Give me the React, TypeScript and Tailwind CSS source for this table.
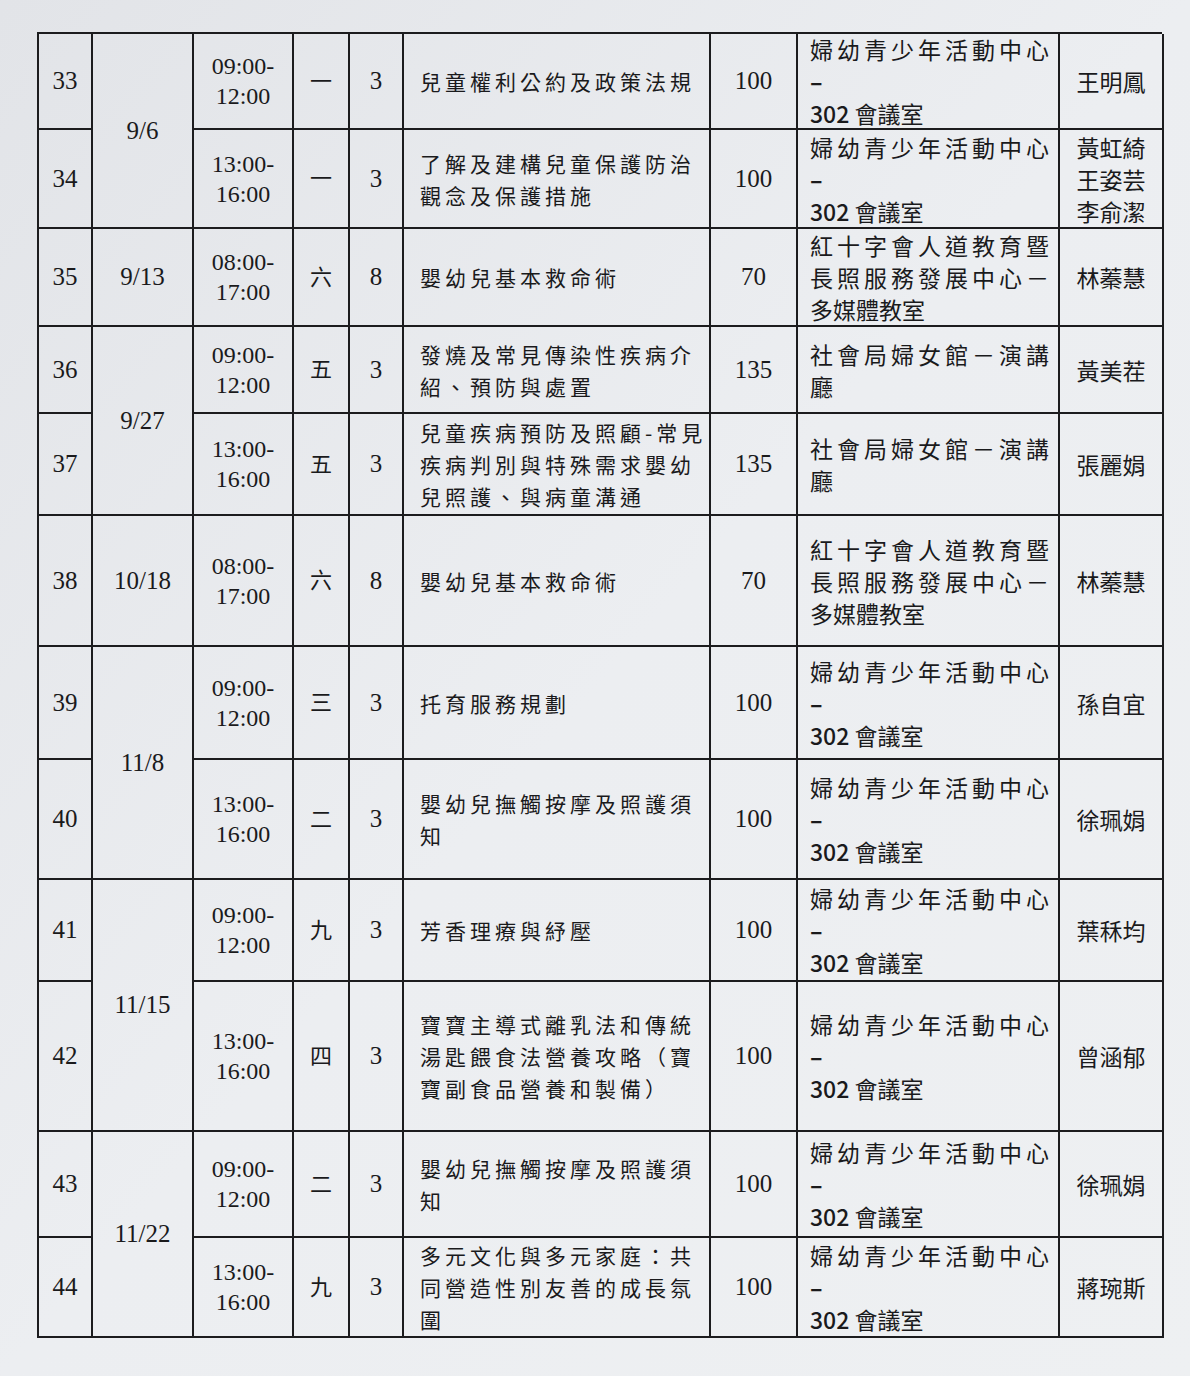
const serif = "[font-family:'Liberation_Serif','Noto_Sans_CJK_TC',serif]";
const sans = "[font-family:'Noto_Sans_CJK_TC','Noto_Sans',sans-serif]";

type Row = {
  no: number;
  date?: string;
  span?: boolean;
  start: string;
  end: string;
  day: string;
  hours: string;
  course: string[];
  seats: string;
  venue: 'A' | 'RC' | 'W';
  names: string[];
};

const rows: Row[] = [
  { no: 33, date: '9/6', span: true, start: '09:00-', end: '12:00', day: '一', hours: '3', course: ['兒童權利公約及政策法規'], seats: '100', venue: 'A', names: ['王明鳳'] },
  { no: 34, start: '13:00-', end: '16:00', day: '一', hours: '3', course: ['了解及建構兒童保護防治', '觀念及保護措施'], seats: '100', venue: 'A', names: ['黃虹綺', '王姿芸', '李俞潔'] },
  { no: 35, date: '9/13', start: '08:00-', end: '17:00', day: '六', hours: '8', course: ['嬰幼兒基本救命術'], seats: '70', venue: 'RC', names: ['林蓁慧'] },
  { no: 36, date: '9/27', span: true, start: '09:00-', end: '12:00', day: '五', hours: '3', course: ['發燒及常見傳染性疾病介', '紹、預防與處置'], seats: '135', venue: 'W', names: ['黃美茬'] },
  { no: 37, start: '13:00-', end: '16:00', day: '五', hours: '3', course: ['兒童疾病預防及照顧-常見', '疾病判別與特殊需求嬰幼', '兒照護、與病童溝通'], seats: '135', venue: 'W', names: ['張麗娟'] },
  { no: 38, date: '10/18', start: '08:00-', end: '17:00', day: '六', hours: '8', course: ['嬰幼兒基本救命術'], seats: '70', venue: 'RC', names: ['林蓁慧'] },
  { no: 39, date: '11/8', span: true, start: '09:00-', end: '12:00', day: '三', hours: '3', course: ['托育服務規劃'], seats: '100', venue: 'A', names: ['孫自宜'] },
  { no: 40, start: '13:00-', end: '16:00', day: '二', hours: '3', course: ['嬰幼兒撫觸按摩及照護須', '知'], seats: '100', venue: 'A', names: ['徐珮娟'] },
  { no: 41, date: '11/15', span: true, start: '09:00-', end: '12:00', day: '九', hours: '3', course: ['芳香理療與紓壓'], seats: '100', venue: 'A', names: ['葉秝均'] },
  { no: 42, start: '13:00-', end: '16:00', day: '四', hours: '3', course: ['寶寶主導式離乳法和傳統', '湯匙餵食法營養攻略（寶', '寶副食品營養和製備）'], seats: '100', venue: 'A', names: ['曾涵郁'] },
  { no: 43, date: '11/22', span: true, start: '09:00-', end: '12:00', day: '二', hours: '3', course: ['嬰幼兒撫觸按摩及照護須', '知'], seats: '100', venue: 'A', names: ['徐珮娟'] },
  { no: 44, start: '13:00-', end: '16:00', day: '九', hours: '3', course: ['多元文化與多元家庭：共', '同營造性別友善的成長氛', '圍'], seats: '100', venue: 'A', names: ['蔣琬斯'] },
];

const cell = 'border-r-2 border-b-2 border-[#1c1c1e] flex items-center';

function Venue({ kind }: { kind: Row['venue'] }) {
  if (kind === 'A') {
    return (
      <div className={`${sans} text-[23px] leading-[32px]`}>
        <div className="tracking-[4px]">婦幼青少年活動中心</div>
        <div className="font-bold">–</div>
        <div><span className="font-medium">302</span> 會議室</div>
      </div>
    );
  }
  if (kind === 'RC') {
    return (
      <div className={`${sans} text-[23px] leading-[32px]`}>
        <div className="tracking-[4px]">紅十字會人道教育暨</div>
        <div className="tracking-[4px]">長照服務發展中心－</div>
        <div>多媒體教室</div>
      </div>
    );
  }
  return (
    <div className={`${sans} text-[23px] leading-[32px]`}>
      <div className="tracking-[4px]">社會局婦女館－演講</div>
      <div>廳</div>
    </div>
  );
}

export default function App() {
  return (
    <div className="w-[1190px] h-[1376px] bg-gradient-to-br from-[#e2e4e8] via-[#eceef1] to-[#eef0f2] text-[#1a1a1c] pt-[32px] pl-[37px]">
      <div className="grid grid-cols-[54px_101px_100px_56px_54px_307px_87px_262px_104px] grid-rows-[96px_99px_98px_87px_102px_131px_113px_120px_102px_150px_106px_100px] border-l-2 border-t-2 border-[#1c1c1e] w-[1125px]">
        {rows.map((r) => (
          <div key={r.no} className="contents">
            <div className={`${cell} justify-center ${serif} text-[25px]`}>{r.no}</div>
            {r.date && (
              <div className={`${cell} justify-center ${serif} text-[25px] ${r.span ? 'row-span-2' : ''}`}>{r.date}</div>
            )}
            <div className={`${cell} justify-center ${serif} text-[24px] leading-[30px] text-center`}>
              <div>
                <div>{r.start}</div>
                <div>{r.end}</div>
              </div>
            </div>
            <div className={`${cell} justify-center ${serif} text-[22px]`}>{r.day}</div>
            <div className={`${cell} justify-center ${serif} text-[25px]`}>{r.hours}</div>
            <div className={`${cell} pl-4 ${sans} text-[21px] leading-[32px] tracking-[4px] whitespace-nowrap`}>
              <div>
                {r.course.map((c) => (
                  <div key={c}>{c}</div>
                ))}
              </div>
            </div>
            <div className={`${cell} justify-center ${serif} text-[25px]`}>{r.seats}</div>
            <div className={`${cell} pl-3 whitespace-nowrap`}>
              <Venue kind={r.venue} />
            </div>
            <div className={`${cell} justify-center ${sans} text-[23px] leading-[32px] text-center`}>
              <div>
                {r.names.map((n) => (
                  <div key={n}>{n}</div>
                ))}
              </div>
            </div>
          </div>
        ))}
      </div>
    </div>
  );
}
